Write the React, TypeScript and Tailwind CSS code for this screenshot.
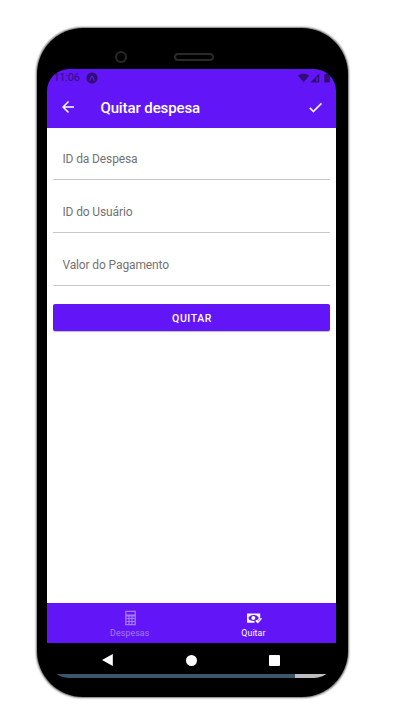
import React from "react";

function StatusBar() {
  return (
    <div className="flex h-[18px] items-center pl-[6px] pr-[5px] text-[#2f0f86]">
      <span className="w-[26px] whitespace-nowrap text-[11px] leading-[18px] tracking-[-0.2px]">11:06</span>
      <svg className="ml-[7px]" width="12" height="12" viewBox="0 0 12 12">
        <circle cx="6" cy="6" r="5.6" fill="#2f0f73" />
        <path d="M3.8 8.2 5.7 4.2h.6l1.9 4" fill="none" stroke="#6216f7" strokeWidth="1.1" strokeLinecap="round" />
      </svg>
      <svg className="ml-auto" width="33" height="10" viewBox="0 0 33 10" fill="#2f0f73">
        <path d="M0 2.4C3.2.1 8 .1 11.2 2.4L5.6 9.6Z" />
        <path d="M21.2.6V9.5H12.3Z" />
        <path d="M18.4 4v4.5h1.3V4Z" fill="#6216f7" />
        <path d="M26.3 1.4h1.4V.5h2.6v.9h1.5v8.1h-5.5Z" />
      </svg>
    </div>
  );
}

function AppBar() {
  return (
    <div className="flex h-[41px] items-center pl-[12px] pr-[12px] text-white">
      <svg width="18" height="18" viewBox="0 0 24 24" fill="currentColor">
        <path d="M20 11H7.83l5.59-5.59L12 4l-8 8 8 8 1.41-1.41L7.83 13H20v-2z" />
      </svg>
      <h1 className="ml-[23px] pt-px text-[15px] font-medium leading-[20px] tracking-[-0.1px]">Quitar despesa</h1>
      <svg className="ml-auto" width="17" height="17" viewBox="0 0 24 24" fill="currentColor" stroke="currentColor" strokeWidth="0.4">
        <path d="M9 16.17 4.83 12l-1.42 1.41L9 19 21 7l-1.41-1.41z" />
      </svg>
    </div>
  );
}

function Field({ label }: { label: string }) {
  return (
    <div className="mb-[12px] flex h-[41px] items-center border-b border-[#c8c8c8] pl-[9px] pt-px text-[12px] tracking-[-0.12px] text-[#737373]">
      {label}
    </div>
  );
}

function CalculatorIcon() {
  return (
    <svg className="relative left-[0.5px]" width="11" height="16" viewBox="0 0 11 16" fill="none" stroke="currentColor">
      <path d="M.8 1.3h9.4v13.4H.8z" strokeWidth="1.3" />
      <path d="M1 5.5h9" strokeWidth="1.8" />
      <path d="M1 8.5h9M1 11.5h9M4 5.5v9M7 5.5v9" strokeWidth="1.2" />
    </svg>
  );
}

function PaymentIcon() {
  return (
    <svg className="relative left-[0.5px]" width="16" height="16" viewBox="0 0 16 16">
      <path d="M1 3.5h13.2v9.2H1z" fill="#fff" />
      <path d="M2.3 8C3.8 4 11 4 12.8 8 11 12 3.8 12 2.3 8Z" fill="#6216f7" />
      <circle cx="7.3" cy="8" r="2" fill="#fff" />
      <path d="m8.3 10 2.4 1.5 4.8-4.5V14H8.7Z" fill="#6216f7" />
      <path d="m10 10.6 1.8 1.8 3.7-4.2" fill="none" stroke="#fff" strokeWidth="1.5" />
    </svg>
  );
}

export default function App() {
  return (
    <main className="h-[728px] w-[409px] overflow-hidden bg-white pl-[37.4px] pt-[28.3px] font-['Roboto',sans-serif]">
      <div className="h-[669px] w-[310.6px] rounded-[46px] bg-black pl-[10px] shadow-[0_0_2px_0.5px_#777]">
        <div className="flex h-[40.7px] items-center pl-[68px] pt-[16px]">
          <div className="size-[12px] rounded-full border-2 border-[#292929]" />
          <div className="ml-[47px] h-[8px] w-[40px] rounded-[4px] border-2 border-[#292929]" />
        </div>
        <div className="flex h-[609px] w-[288.4px] flex-col overflow-hidden rounded-[22px] bg-black">
          <header className="h-[58.7px] shrink-0 bg-[#6216f7]">
            <StatusBar />
            <AppBar />
          </header>
          <section className="flex h-[475.3px] shrink-0 flex-col bg-white px-[6px] pt-[11.3px]">
            <Field label="ID da Despesa" />
            <Field label="ID do Usuário" />
            <Field label="Valor do Pagamento" />
            <button className="mt-[6px] flex h-[27px] w-full items-center justify-center rounded-[2px] bg-[#6216f7] pt-[2px] pl-px text-[10.5px] font-medium tracking-[0.6px] text-white shadow-[0_1px_1px_#0004]">
              QUITAR
            </button>
          </section>
          <nav className="grid h-[39.7px] shrink-0 grid-cols-2 bg-[#6216f7] px-[20.5px] text-[8.8px] leading-[12px] tracking-[0.1px]">
            <div className="flex flex-col items-center pt-[7px] text-[#a77cfb]">
              <CalculatorIcon />
              <span className="mt-px">Despesas</span>
            </div>
            <div className="flex flex-col items-center pt-[7px] text-white">
              <PaymentIcon />
              <span className="mt-px">Quitar</span>
            </div>
          </nav>
          <div className="flex h-[31.3px] shrink-0 items-center pl-[55px] pt-[4px]">
            <svg width="11" height="12" viewBox="0 0 11 12"><path d="M10.8 0v12L0 6Z" fill="#fff" /></svg>
            <div className="ml-[72.5px] size-[11px] rounded-full bg-white" />
            <div className="ml-[72px] size-[11px] rounded-[1px] bg-white" />
          </div>
          <div className="flex h-[4px] shrink-0">
            <div className="w-[248px] bg-[#3c566c]" />
            <div className="flex-1 bg-[#bdbdbd]" />
          </div>
        </div>
      </div>
    </main>
  );
}
